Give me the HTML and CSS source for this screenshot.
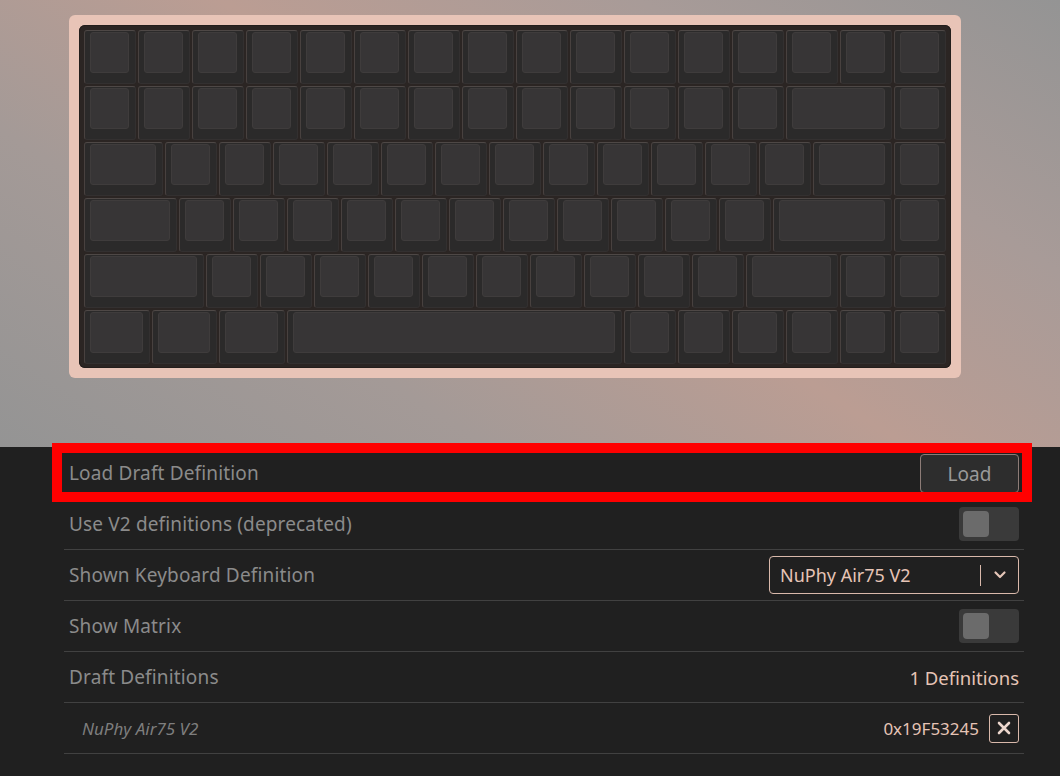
FILE: index.html
```html
<!DOCTYPE html>
<html>
<head>
<meta charset="utf-8">
<link rel="stylesheet" href="styles.css">
</head>
<body>
<div class="top">
  <div class="case">
    <div class="plate">
      <div class="krow">
        <div class="key"><i></i></div><div class="key"><i></i></div><div class="key"><i></i></div><div class="key"><i></i></div>
        <div class="key"><i></i></div><div class="key"><i></i></div><div class="key"><i></i></div><div class="key"><i></i></div>
        <div class="key"><i></i></div><div class="key"><i></i></div><div class="key"><i></i></div><div class="key"><i></i></div>
        <div class="key"><i></i></div><div class="key"><i></i></div><div class="key"><i></i></div><div class="key"><i></i></div>
      </div>
      <div class="krow">
        <div class="key"><i></i></div><div class="key"><i></i></div><div class="key"><i></i></div><div class="key"><i></i></div>
        <div class="key"><i></i></div><div class="key"><i></i></div><div class="key"><i></i></div><div class="key"><i></i></div>
        <div class="key"><i></i></div><div class="key"><i></i></div><div class="key"><i></i></div><div class="key"><i></i></div>
        <div class="key"><i></i></div><div class="key u2"><i></i></div><div class="key"><i></i></div>
      </div>
      <div class="krow">
        <div class="key u15"><i></i></div>
        <div class="key"><i></i></div><div class="key"><i></i></div><div class="key"><i></i></div><div class="key"><i></i></div>
        <div class="key"><i></i></div><div class="key"><i></i></div><div class="key"><i></i></div><div class="key"><i></i></div>
        <div class="key"><i></i></div><div class="key"><i></i></div><div class="key"><i></i></div><div class="key"><i></i></div>
        <div class="key u15"><i></i></div><div class="key"><i></i></div>
      </div>
      <div class="krow">
        <div class="key u175"><i></i></div>
        <div class="key"><i></i></div><div class="key"><i></i></div><div class="key"><i></i></div><div class="key"><i></i></div>
        <div class="key"><i></i></div><div class="key"><i></i></div><div class="key"><i></i></div><div class="key"><i></i></div>
        <div class="key"><i></i></div><div class="key"><i></i></div><div class="key"><i></i></div>
        <div class="key u225"><i></i></div><div class="key"><i></i></div>
      </div>
      <div class="krow">
        <div class="key u225"><i></i></div>
        <div class="key"><i></i></div><div class="key"><i></i></div><div class="key"><i></i></div><div class="key"><i></i></div>
        <div class="key"><i></i></div><div class="key"><i></i></div><div class="key"><i></i></div><div class="key"><i></i></div>
        <div class="key"><i></i></div><div class="key"><i></i></div>
        <div class="key u175"><i></i></div><div class="key"><i></i></div><div class="key"><i></i></div>
      </div>
      <div class="krow">
        <div class="key u125"><i></i></div><div class="key u125"><i></i></div><div class="key u125"><i></i></div>
        <div class="key u625"><i></i></div>
        <div class="key"><i></i></div><div class="key"><i></i></div><div class="key"><i></i></div>
        <div class="key"><i></i></div><div class="key"><i></i></div><div class="key"><i></i></div>
      </div>
    </div>
  </div>
</div>

<div class="bottom">
  <div class="settings">
    <div class="row">
      <span class="label">Load Draft Definition</span>
      <button class="btn">Load</button>
    </div>
    <div class="row">
      <span class="label">Use V2 definitions (deprecated)</span>
      <div class="toggle"><div class="knob"></div></div>
    </div>
    <div class="row">
      <span class="label">Shown Keyboard Definition</span>
      <div class="select">
        <span class="select-val">NuPhy Air75 V2</span>
        <span class="select-sep"></span>
        <svg class="chev" width="14" height="10" viewBox="0 0 14 10"><path d="M2.5 2.5 L7 7 L11.5 2.5" fill="none" stroke="#e6c6b8" stroke-width="2.2" stroke-linecap="round" stroke-linejoin="round"/></svg>
      </div>
    </div>
    <div class="row">
      <span class="label">Show Matrix</span>
      <div class="toggle"><div class="knob"></div></div>
    </div>
    <div class="row">
      <span class="label">Draft Definitions</span>
      <span class="value">1 Definitions</span>
    </div>
    <div class="row sub">
      <span class="label italic">NuPhy Air75 V2</span>
      <div class="right">
        <span class="value hex">0x19F53245</span>
        <button class="xbtn"><svg width="14" height="14" viewBox="0 0 14 14"><path d="M2 2 L12 12 M12 2 L2 12" stroke="#ecd6cd" stroke-width="2.6" stroke-linecap="round"/></svg></button>
      </div>
    </div>
  </div>
  <div class="highlight"></div>
</div>
</body>
</html>
```
FILE: styles.css
```css
* { box-sizing: border-box; }
html, body { margin: 0; padding: 0; }
body {
  width: 1060px;
  height: 776px;
  overflow: hidden;
  background: #202020;
  font-family: "Noto Sans", "Open Sans", sans-serif;
}
.top {
  height: 447px;
  padding: 15px 0 0 69px;
  background: linear-gradient(33deg, #949494 0%, #a49a97 28%, #bb9d93 52%, #a89b98 76%, #949494 100%);
}
.case {
  width: 892px;
  height: 363px;
  padding: 10px;
  background: #e8c4b7;
  border-radius: 6px;
}
.plate {
  width: 872px;
  height: 343px;
  padding: 4px 4px 3px 4px;
  background: #2b2523;
  border-radius: 6px;
  box-shadow: inset 0 0 0 1px #231e1c;
}
.krow {
  display: flex;
  height: 56px;
}
.key {
  width: 52px;
  height: 54px;
  margin: 1px;
  padding: 1px 6px 10px 5px;
  display: flex;
  background: #2b2a2a;
  border: 1px solid #333030;
  border-top-color: #4e4846;
  border-left-color: #48413f;
  border-radius: 3px;
}
.key i {
  display: block;
  flex: 1;
  background: #373536;
  border: 1px solid #3f3c3c;
  border-radius: 3px;
}
.key.u125 { width: 65.5px; }
.key.u15 { width: 79px; }
.key.u175 { width: 92.5px; }
.key.u2 { width: 106px; }
.key.u225 { width: 119.5px; }
.key.u625 { width: 335.5px; }

.bottom {
  position: relative;
  height: 329px;
}
.settings {
  margin-left: 64px;
  width: 960px;
  padding-top: 1px;
}
.row {
  height: 51px;
  border-bottom: 1px solid #414141;
  display: flex;
  align-items: center;
  justify-content: space-between;
  padding: 0 5px;
}
.label {
  color: #8b8b8b;
  font-size: 19px;
  letter-spacing: 0.15px;
}
.label.italic {
  font-style: italic;
  font-size: 17px;
  letter-spacing: 0;
  padding-left: 13px;
  color: #7e7e7e;
}
.value {
  color: #e6c4b6;
  font-size: 18.5px;
}
.value.hex {
  font-size: 17px;
}
.btn {
  width: 99px;
  height: 39px;
  background: #2d2d2d;
  border: 1px solid #8d7c77;
  border-radius: 4px;
  color: #9a9a9a;
  font-family: inherit;
  font-size: 19px;
  padding: 0;
  margin-top: 1px;
}
.toggle {
  width: 60px;
  height: 34px;
  background: #3a3a3a;
  border-radius: 4px;
  padding: 4px;
}
.knob {
  width: 26px;
  height: 26px;
  background: #6b6b6b;
  border-radius: 4px;
}
.select {
  width: 250px;
  height: 38px;
  border: 1px solid #d9b9ab;
  border-radius: 4px;
  display: flex;
  align-items: center;
  padding-left: 10px;
}
.select-val {
  color: #e6c4b6;
  font-size: 18px;
  flex: 1;
}
.select-sep {
  width: 1px;
  height: 21px;
  background: #d9b9ab;
}
.chev {
  margin: 0 11px 0 12px;
}
.right {
  display: flex;
  align-items: center;
  gap: 10px;
}
.xbtn {
  width: 30px;
  height: 29px;
  border: 1px solid #d9b9ab;
  border-radius: 3px;
  background: transparent;
  padding: 0;
  display: flex;
  align-items: center;
  justify-content: center;
}
.highlight {
  position: absolute;
  left: 52px;
  top: -4px;
  width: 980px;
  height: 59px;
  border: 10px solid #ff0000;
}
```
